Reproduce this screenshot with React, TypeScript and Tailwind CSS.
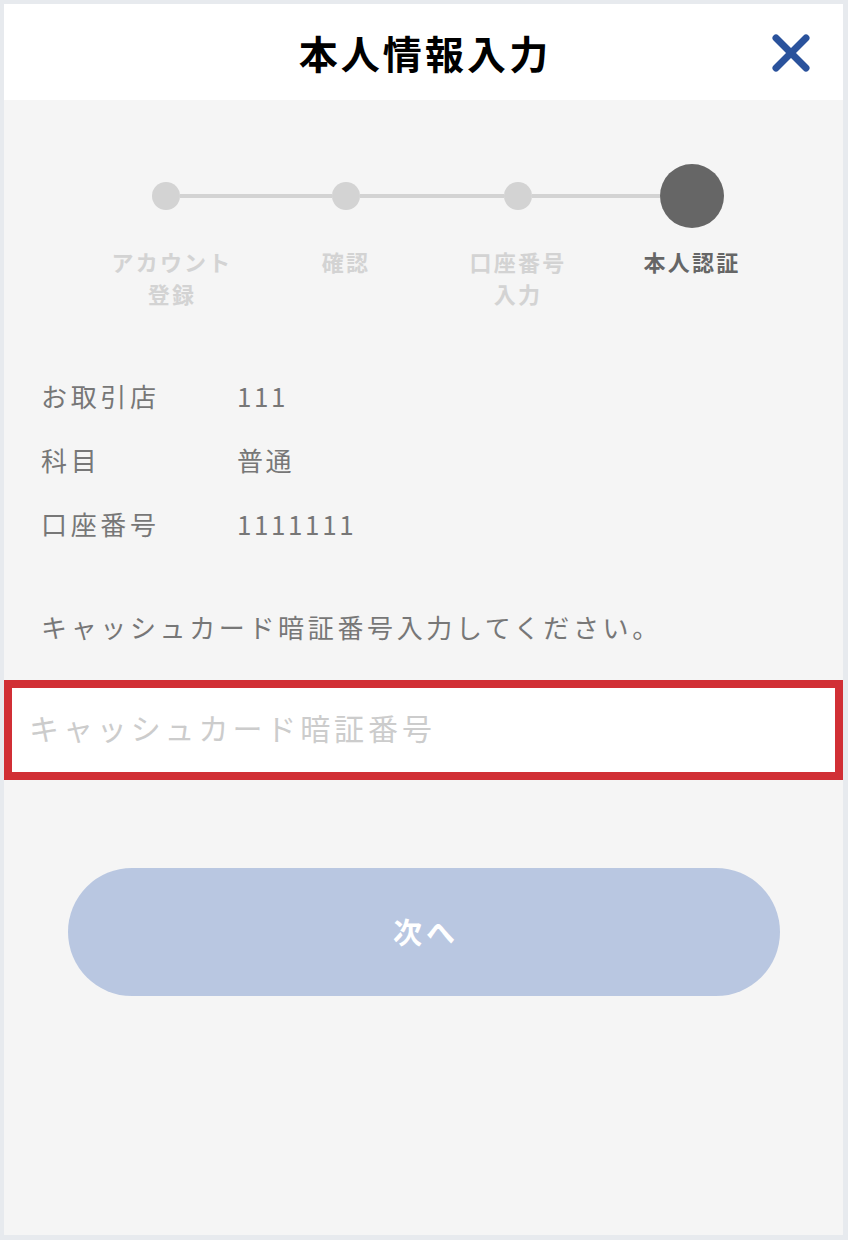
import React from "react";

const font = { fontFamily: '"Noto Sans CJK JP", "Noto Sans", sans-serif' };

const steps = [
  { label: ["アカウント", "登録"], active: false },
  { label: ["確認"], active: false },
  { label: ["口座番号", "入力"], active: false },
  { label: ["本人認証"], active: true },
];

export default function App() {
  return (
    <div
      className="w-[848px] h-[1240px] bg-[#e7eaee] pl-[4px] pt-[4px] pr-[5px] pb-[5px]"
      style={font}
    >
      <div className="h-full w-full bg-[#f5f5f5] flex flex-col">
        {/* Header */}
        <div className="h-[96px] bg-white grid grid-cols-[1fr_auto_1fr] items-center">
          <div />
          <h1 className="text-[39px] font-bold text-black tracking-[0.08em] leading-none pl-[3px]">
            本人情報入力
          </h1>
          <div className="flex justify-end pr-[32px]">
            <svg width="40" height="40" viewBox="0 0 40 40" className="mt-[1px]">
              <line x1="5" y1="5" x2="35" y2="35" stroke="#2a529c" strokeWidth="7" strokeLinecap="round" />
              <line x1="35" y1="5" x2="5" y2="35" stroke="#2a529c" strokeWidth="7" strokeLinecap="round" />
            </svg>
          </div>
        </div>

        {/* Stepper */}
        <div className="mt-[64px] ml-[72px] grid grid-cols-[180px_180px_164px_184px]">
          {steps.map((s, i) => (
            <div key={i} className="flex flex-col items-center">
              <div className="h-[64px] w-full flex items-center">
                <div className={`flex-1 h-[4px] ${i === 0 ? "" : "bg-[#d3d3d3]"}`} />
                {s.active ? (
                  <div className="w-[64px] h-[64px] rounded-full bg-[#666666]" />
                ) : (
                  <div className="w-[28px] h-[28px] rounded-full bg-[#d3d3d3]" />
                )}
                <div className={`flex-1 h-[4px] ${i === steps.length - 1 ? "" : "bg-[#d3d3d3]"}`} />
              </div>
              <div
                className={`mt-[17px] text-center text-[22px] leading-[32px] font-bold tracking-[0.1em] ${
                  s.active ? "text-[#666666]" : "text-[#d3d3d3]"
                } ${i === 0 ? "pl-[12px]" : ""}`}
              >
                {s.label.map((l, j) => (
                  <div key={j}>{l}</div>
                ))}
              </div>
            </div>
          ))}
        </div>

        {/* Info rows */}
        <div className="mt-[54px] pl-[37px] text-[26px] text-[#777777]">
          {[
            ["お取引店", "111"],
            ["科目", "普通"],
            ["口座番号", "1111111"],
          ].map(([k, v]) => (
            <div key={k} className="h-[64px] flex items-center">
              <div className="w-[196px] tracking-[0.14em]">{k}</div>
              <div className="tracking-[0.1em]">{v}</div>
            </div>
          ))}
        </div>

        <p className="mt-[52px] pl-[37px] text-[26px] leading-[40px] text-[#777777] tracking-[0.14em]">
          キャッシュカード暗証番号入力してください。
        </p>

        {/* Input */}
        <div className="mt-[33px] h-[100px] border-[8px] border-[#d12f35] bg-white flex items-center pl-[17px] pb-[6px]">
          <span className="text-[30px] text-[#cccccc] tracking-[0.13em]">キャッシュカード暗証番号</span>
        </div>

        {/* Button */}
        <div className="mt-[88px] pl-[64px]">
          <div className="w-[712px] h-[128px] rounded-full bg-[#b9c7e1] flex items-center justify-center">
            <span className="text-[29px] font-bold text-white tracking-[0.14em] pl-[4px]">次へ</span>
          </div>
        </div>
      </div>
    </div>
  );
}
